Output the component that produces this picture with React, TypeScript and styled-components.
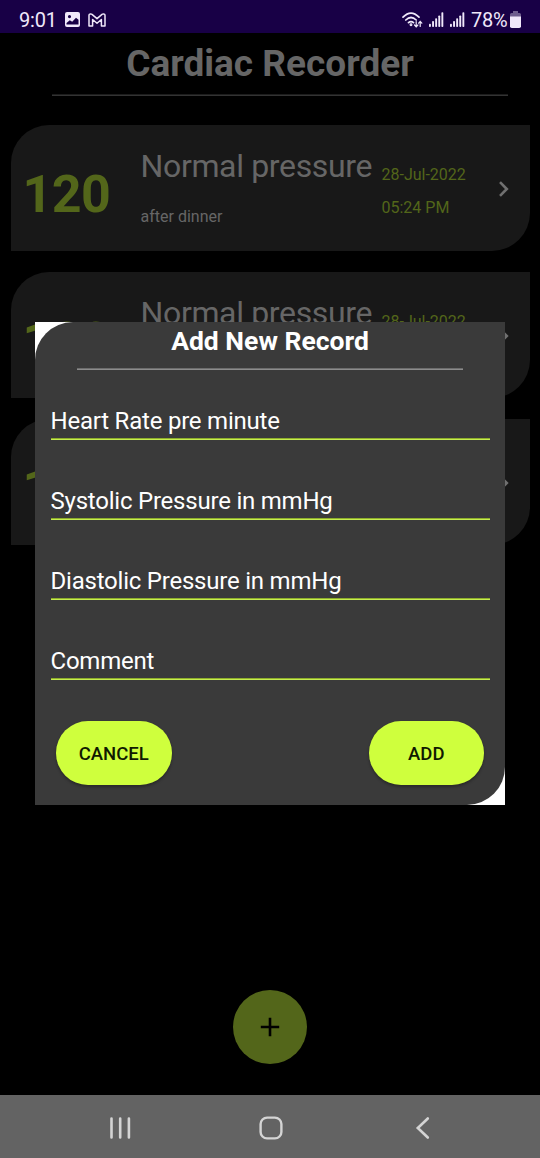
import React from "react";
import styled, { createGlobalStyle } from "styled-components";

const GlobalStyle = createGlobalStyle`
  *, *::before, *::after { box-sizing: border-box; }
  body { margin: 0; background: #000; font-family: Roboto, sans-serif; }
  h1, h2, p { margin: 0; font-weight: inherit; }
  button { font-family: inherit; border: 0; padding: 0; }
  svg { display: block; flex: none; }
`;

const Screen = styled.div`
  position: relative;
  display: flex;
  flex-direction: column;
  width: 540px;
  height: 1158px;
  overflow: hidden;
  background: #000;
`;

const StatusBar = styled.header`
  display: flex;
  flex: none;
  align-items: center;
  justify-content: space-between;
  height: 33px;
  padding: 6px 19px 0 19px;
  background: #180046;
  color: #f0e8fa;
`;

const StatusGroup = styled.div<{ $gap: number }>`
  display: flex;
  align-items: center;
  gap: ${(p) => p.$gap}px;
`;

const StatusText = styled.span<{ $width: number }>`
  width: ${(p) => p.$width}px;
  font-size: 20px;
  letter-spacing: -0.2px;
  line-height: 26px;
  white-space: nowrap;
`;

const Main = styled.main`
  display: flex;
  flex: 1;
  flex-direction: column;
  align-items: center;
  position: relative;
`;

const PageTitle = styled.h1`
  margin-top: 10px;
  font-size: 37px;
  line-height: 42px;
  font-weight: 700;
  color: #666;
`;

const PageRule = styled.div`
  width: 456px;
  height: 2px;
  margin: 9px 0 0 20px;
  background: linear-gradient(#1c1c1c 50%, #333 50%);
`;

const RecordList = styled.div`
  display: flex;
  flex-direction: column;
  gap: 21px;
  width: 519px;
  margin-top: 29px;
`;

const RecordCard = styled.article`
  display: flex;
  height: 126px;
  padding-left: 13px;
  border-radius: 38px 0;
  background: #181818;
`;

const Rate = styled.div`
  width: 117px;
  padding-top: 40px;
  font-size: 52px;
  letter-spacing: -0.6px;
  text-indent: -1px;
  line-height: 60px;
  font-weight: 700;
  color: #53661a;
`;

const Details = styled.div`
  width: 241px;
  padding-top: 22px;
  color: #666;
  white-space: nowrap;
`;

const Status = styled.p`
  font-size: 32px;
  letter-spacing: -0.34px;
  line-height: 38px;
`;

const Note = styled.p`
  margin-top: 22px;
  font-size: 16px;
  line-height: 20px;
`;

const When = styled.div`
  width: 116px;
  padding-top: 34px;
  font-size: 16px;
  line-height: 32.5px;
  color: #53661a;
  white-space: nowrap;
`;

const Chevron = styled.svg`
  margin-top: 56px;
`;

const AddFab = styled.button`
  display: flex;
  align-items: center;
  justify-content: center;
  width: 74px;
  height: 74px;
  margin-top: auto;
  margin-bottom: 31px;
  border-radius: 50%;
  background: #53661a;
`;

const NavBar = styled.nav`
  display: flex;
  flex: none;
  align-items: center;
  gap: 127px;
  height: 63px;
  padding: 2px 0 0 108px;
  background: #636363;
`;

const DialogWindow = styled.div`
  position: absolute;
  top: 322px;
  left: 35px;
  width: 470px;
  height: 483px;
  background: #fff;
`;

const DialogPanel = styled.section`
  display: flex;
  flex-direction: column;
  height: 100%;
  border-radius: 38px 0;
  background: #3a3a3a;
  color: #fff;
`;

const DialogTitle = styled.h2`
  padding-top: 3px;
  font-size: 26.5px;
  line-height: 32px;
  font-weight: 700;
  text-align: center;
`;

const DialogRule = styled.div`
  width: 386px;
  height: 2px;
  margin: 11px auto 30px;
  background: linear-gradient(#6c6c6c 50%, #8c8c8c 50%);
`;

const Field = styled.div`
  height: 40px;
  margin: 0 15.5px 40px;
  padding-top: 6px;
  background: linear-gradient(#8fad2c 50%, #c6ee50 50%) bottom / 100% 2px no-repeat;
  font-size: 24px;
  letter-spacing: -0.22px;
  line-height: 30px;
  white-space: nowrap;
`;

const Actions = styled.div`
  display: flex;
  justify-content: space-between;
  padding: 1px 21px 0;
`;

const ActionButton = styled.button`
  width: 115.5px;
  height: 64px;
  padding-top: 1px;
  border-radius: 32px;
  background: #cfff3d;
  box-shadow: 0 2px 3px rgba(0, 0, 0, 0.3);
  color: #101a00;
  font-size: 18.5px;
  font-weight: 500;
`;

const records = [
  { rate: 120, status: "Normal pressure", note: "after dinner", date: "28-Jul-2022", time: "05:24 PM" },
  { rate: 120, status: "Normal pressure", note: "after dinner", date: "28-Jul-2022", time: "05:24 PM" },
  { rate: 120, status: "Normal pressure", note: "after dinner", date: "28-Jul-2022", time: "05:24 PM" },
];

const fields = [
  "Heart Rate pre minute",
  "Systolic Pressure in mmHg",
  "Diastolic Pressure in mmHg",
  "Comment",
];

const PictureIcon = () => (
  <svg width="15" height="15" viewBox="0 0 15 15">
    <path
      fill="currentColor"
      fillRule="evenodd"
      d="M2 0h11a2 2 0 0 1 2 2v11a2 2 0 0 1-2 2H2a2 2 0 0 1-2-2V2a2 2 0 0 1 2-2ZM4.5 3a1.6 1.6 0 1 0 0 3.2 1.6 1.6 0 0 0 0-3.2ZM1.5 12.5h12V7.8L11 5.8 7.2 9.8 4.8 8.2 1.5 11Z"
    />
  </svg>
);

const MailIcon = () => (
  <svg width="18" height="14" viewBox="0 0 18 14" fill="none" stroke="currentColor" strokeWidth="1.5" strokeLinejoin="round">
    <path d="M1 13V2.5Q1 .8 2.7 .9L4 1.4 9 5.6 14 1.4 15.3 .9Q17 .8 17 2.5V13H13.4V6.5L9 10.2 4.6 6.5V13Z" />
  </svg>
);

const WifiIcon = () => (
  <svg width="21" height="16" viewBox="0 0 21 16" fill="none" stroke="currentColor" strokeWidth="1.7" strokeLinecap="round">
    <path d="M1 5.2Q9 -3 17 5.2M3.8 8Q9 3 14.2 8M6.5 10.7Q9 8.4 11.5 10.7" />
    <circle cx="9" cy="12.8" r="0.6" />
    <path strokeWidth="1.2" d="M14.2 9.5V14.6M12.5 13 14.2 14.8 15.9 13M18.2 14.5V9.6M16.6 11.2 18.2 9.5 19.8 11.2" />
  </svg>
);

const SignalIcon = () => (
  <svg width="15" height="15" viewBox="0 0 15 15" fill="currentColor">
    <rect x="0" y="11.8" width="1.9" height="3.2" rx=".8" />
    <rect x="3.1" y="9" width="1.9" height="6" rx=".8" />
    <rect x="6.2" y="6.2" width="1.9" height="8.8" rx=".8" />
    <rect x="9.3" y="3.4" width="1.9" height="11.6" rx=".8" />
    <rect x="12.4" y="0.2" width="1.9" height="14.8" rx=".8" />
  </svg>
);

const BatteryIcon = () => (
  <svg width="11" height="17" viewBox="0 0 11 17" fill="currentColor">
    <path opacity=".4" d="M3 0h5v2h1.5Q11 2 11 3.5V6H0V3.5Q0 2 1.5 2H3Z" />
    <path d="M0 5.5H11V15.2Q11 17 9.2 17H1.8Q0 17 0 15.2Z" />
  </svg>
);

export default function App() {
  return (
    <>
      <GlobalStyle />
      <Screen>
        <StatusBar>
          <StatusGroup $gap={8}>
            <StatusText $width={38}>9:01</StatusText>
            <PictureIcon />
            <MailIcon />
          </StatusGroup>
          <StatusGroup $gap={6}>
            <WifiIcon />
            <SignalIcon />
            <SignalIcon />
            <StatusGroup $gap={2}>
              <StatusText $width={37}>78%</StatusText>
              <BatteryIcon />
            </StatusGroup>
          </StatusGroup>
        </StatusBar>
        <Main>
          <PageTitle>Cardiac Recorder</PageTitle>
          <PageRule />
          <RecordList>
            {records.map((r, i) => (
              <RecordCard key={i}>
                <Rate>{r.rate}</Rate>
                <Details>
                  <Status>{r.status}</Status>
                  <Note>{r.note}</Note>
                </Details>
                <When>
                  <p>{r.date}</p>
                  <p>{r.time}</p>
                </When>
                <Chevron width="14" height="16" viewBox="0 0 14 16" fill="none" stroke="#707070" strokeWidth="2.6">
                  <path d="M2 1.2 8.8 8 2 14.8" />
                </Chevron>
              </RecordCard>
            ))}
          </RecordList>
          <AddFab aria-label="Add record">
            <svg width="20" height="20" viewBox="0 0 20 20" stroke="#000" strokeWidth="2.6">
              <path d="M10 .8V19.2M.8 10H19.2" />
            </svg>
          </AddFab>
        </Main>
        <NavBar>
          <svg width="24" height="24" viewBox="0 0 24 24" stroke="#d4d4d4" strokeWidth="2.6" strokeLinecap="round">
            <path d="M3.5 2.5V21.5M12.2 2.5V21.5M20.9 2.5V21.5" />
          </svg>
          <svg width="24" height="24" viewBox="0 0 24 24" fill="none" stroke="#d4d4d4" strokeWidth="2.4">
            <rect x="1.6" y="1.6" width="20.8" height="20.8" rx="6.5" />
          </svg>
          <svg width="24" height="24" viewBox="-5 0 24 24" fill="none" stroke="#d4d4d4" strokeWidth="2.6" strokeLinecap="round">
            <path d="M12.8 2.5 2.8 12 12.8 21.5" />
          </svg>
        </NavBar>
        <DialogWindow role="dialog">
          <DialogPanel>
            <DialogTitle>Add New Record</DialogTitle>
            <DialogRule />
            {fields.map((f) => (
              <Field key={f}>{f}</Field>
            ))}
            <Actions>
              <ActionButton>CANCEL</ActionButton>
              <ActionButton>ADD</ActionButton>
            </Actions>
          </DialogPanel>
        </DialogWindow>
      </Screen>
    </>
  );
}
